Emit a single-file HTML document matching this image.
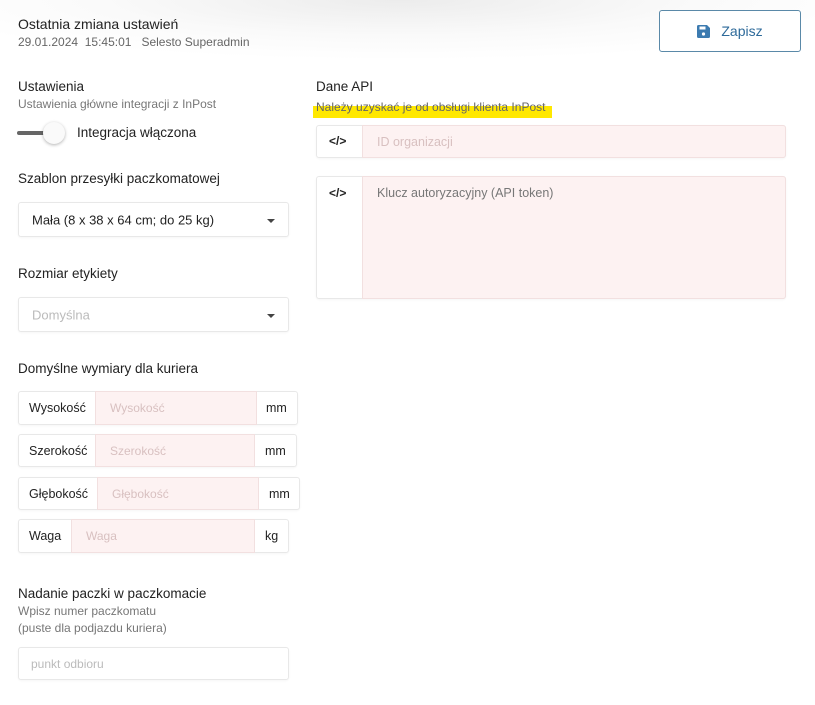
<!DOCTYPE html>
<html><head><meta charset="utf-8"><style>
*{box-sizing:border-box;margin:0;padding:0}
body{width:815px;height:705px;position:relative;background:#fff;font-family:"Liberation Sans","DejaVu Sans",sans-serif;color:#222;overflow:hidden}
.a{position:absolute;white-space:nowrap}
.hdr{position:absolute;left:0;top:0;width:815px;height:70px;background:radial-gradient(ellipse 500px 60px at 400px 0px,#ececec,#fafafa 60%,#fff)}
.t{font-size:13.5px;color:#222}
.s{font-size:12px;color:#777}
.box{position:absolute;border:1px solid #e8e8e8;border-radius:3px;background:#fff;box-shadow:0 1px 2px rgba(0,0,0,.04)}
.inp{position:absolute;top:-1px;bottom:-1px;background:#fdf2f2;border:1px solid #f2e0e0;font-size:12px;color:#d8c0c0;padding-left:14px;display:flex;align-items:center}
.lbl{position:absolute;font-size:12.5px;color:#222;top:50%;transform:translateY(-50%)}
.caret{position:absolute;width:0;height:0;border-left:4px solid transparent;border-right:4px solid transparent;border-top:4px solid #444}
.code{position:absolute;left:12px;font-size:12px;font-weight:bold;color:#222}
</style></head><body>
<div class="hdr"></div>
<div class="a t" style="left:18px;top:16px;font-size:14px">Ostatnia zmiana ustawień</div>
<div class="a s" style="left:18px;top:35px;font-size:12px;color:#666">29.01.2024&nbsp; 15:45:01 &nbsp; Selesto Superadmin</div>
<div class="a" style="left:659px;top:10px;width:142px;height:42px;border:1px solid #5a89a8;border-radius:3px;background:#fff;display:flex;align-items:center;justify-content:center;color:#2d6a9a;font-size:14px">
<svg width="13" height="13" viewBox="0 0 13 13" style="margin-right:11px"><path d="M0 1.5A1.5 1.5 0 0 1 1.5 0h8.5l3 3v8.5a1.5 1.5 0 0 1-1.5 1.5h-10A1.5 1.5 0 0 1 0 11.5z" fill="#3c7bb0"/><rect x="2.5" y="1.5" width="6" height="3" fill="#fff"/><circle cx="6.5" cy="9" r="1.6" fill="#fff"/></svg>Zapisz</div>

<div class="a t" style="left:18px;top:79px">Ustawienia</div>
<div class="a s" style="left:18px;top:97px">Ustawienia główne integracji z InPost</div>
<div class="a" style="left:17px;top:131px;width:30px;height:4px;background:#666;border-radius:2px"></div>
<div class="a" style="left:43px;top:122px;width:22px;height:22px;border-radius:50%;background:#fafafa;box-shadow:0 1px 3px rgba(0,0,0,.3)"></div>
<div class="a t" style="left:77px;top:125px">Integracja włączona</div>

<div class="a t" style="left:18px;top:171px">Szablon przesyłki paczkomatowej</div>
<div class="box" style="left:18px;top:202px;width:271px;height:35px"><span class="lbl" style="left:13px;font-size:13px">Mała (8 x 38 x 64 cm; do 25 kg)</span><div class="caret" style="left:248px;top:16px"></div></div>

<div class="a t" style="left:18px;top:266px">Rozmiar etykiety</div>
<div class="box" style="left:18px;top:297px;width:271px;height:35px"><span class="lbl" style="left:13px;font-size:13px;color:#bbb">Domyślna</span><div class="caret" style="left:248px;top:16px"></div></div>

<div class="a t" style="left:18px;top:361px">Domyślne wymiary dla kuriera</div>
<div class="box" style="left:18px;top:391px;width:280px;height:34px"><span class="lbl" style="left:10px">Wysokość</span><div class="inp" style="left:76px;width:162px">Wysokość</div><span class="lbl" style="left:247px">mm</span></div>
<div class="box" style="left:18px;top:434px;width:279px;height:33px"><span class="lbl" style="left:10px">Szerokość</span><div class="inp" style="left:76px;width:160px">Szerokość</div><span class="lbl" style="left:246px">mm</span></div>
<div class="box" style="left:18px;top:477px;width:282px;height:33px"><span class="lbl" style="left:10px">Głębokość</span><div class="inp" style="left:78px;width:162px">Głębokość</div><span class="lbl" style="left:250px">mm</span></div>
<div class="box" style="left:18px;top:519px;width:271px;height:34px"><span class="lbl" style="left:10px">Waga</span><div class="inp" style="left:52px;width:184px">Waga</div><span class="lbl" style="left:246px">kg</span></div>

<div class="a t" style="left:18px;top:586px">Nadanie paczki w paczkomacie</div>
<div class="a s" style="left:18px;top:604px">Wpisz numer paczkomatu</div>
<div class="a s" style="left:18px;top:621px">(puste dla podjazdu kuriera)</div>
<div class="box" style="left:18px;top:647px;width:271px;height:33px"><span class="lbl" style="left:12px;font-size:12px;color:#bbb">punkt odbioru</span></div>

<div class="a t" style="left:316px;top:79px">Dane API</div>
<div class="a" style="left:313px;top:106px;width:239px;height:12px;background:#ffe800"></div>
<div class="a s" style="left:316px;top:100px;color:#666">Należy uzyskać je od obsługi klienta InPost</div>
<div class="box" style="left:316px;top:125px;width:470px;height:33px"><span class="code" style="top:8px">&lt;/&gt;</span><div class="inp" style="left:45px;right:-1px;border-radius:0 3px 3px 0;font-size:12.5px">ID organizacji</div></div>
<div class="box" style="left:316px;top:176px;width:470px;height:123px"><span class="code" style="top:9px">&lt;/&gt;</span><div class="inp" style="left:45px;right:-1px;border-radius:0 3px 3px 0;align-items:flex-start;padding-top:9px;color:#777;font-size:12.5px">Klucz autoryzacyjny (API token)</div></div>
</body></html>
